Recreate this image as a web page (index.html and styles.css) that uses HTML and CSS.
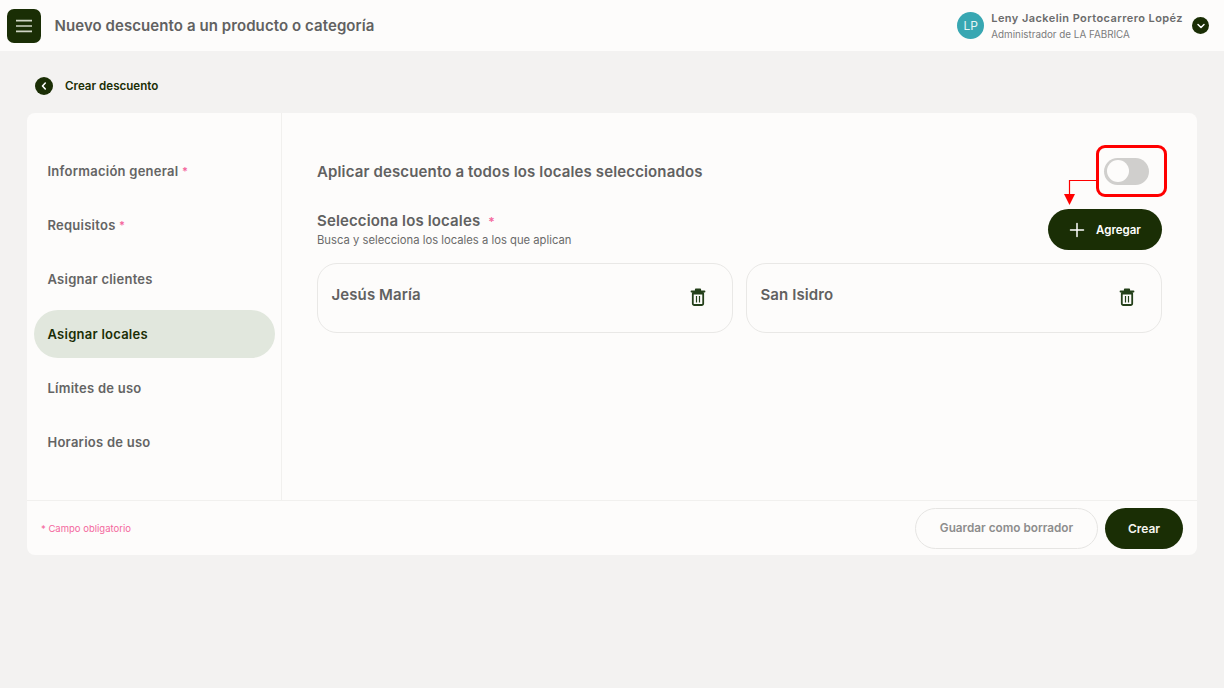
FILE: index.html
```html
<!DOCTYPE html>
<html lang="es">
<head>
<meta charset="utf-8">
<title>Nuevo descuento</title>
<link rel="stylesheet" href="styles.css">
</head>
<body>
<header class="topbar">
  <div class="topbar-left">
    <button class="menu-btn" aria-label="Menú">
      <svg width="18" height="14" viewBox="0 0 18 14"><path d="M1 1.700h16M1 7h16M1 12.300h16" stroke="#cfd5c5" stroke-width="1.700" fill="none"/></svg>
    </button>
    <h1 class="page-title">Nuevo descuento a un producto o categoría</h1>
  </div>
  <div class="user">
    <div class="avatar">LP</div>
    <div class="user-text">
      <div class="user-name">Leny Jackelin Portocarrero Lopéz</div>
      <div class="user-role">Administrador de LA FABRICA</div>
    </div>
    <span class="round-icon small">
      <svg width="10" height="10" viewBox="0 0 10 10"><path d="M2 3.500 5 6.500 8 3.500" stroke="#fff" stroke-width="1.500" stroke-linecap="round" stroke-linejoin="round" fill="none"/></svg>
    </span>
  </div>
</header>

<main class="page">
  <div class="crumb">
    <span class="round-icon">
      <svg width="10" height="10" viewBox="0 0 10 10"><path d="M6.300 2 3.500 5l2.800 3" stroke="#fff" stroke-width="1.600" stroke-linecap="round" stroke-linejoin="round" fill="none"/></svg>
    </span>
    <span class="crumb-text">Crear descuento</span>
  </div>

  <section class="card">
    <div class="card-body">
      <nav class="side">
        <a class="side-item">Información general <span class="req">*</span></a>
        <a class="side-item">Requisitos <span class="req">*</span></a>
        <a class="side-item">Asignar clientes</a>
        <a class="side-item active">Asignar locales</a>
        <a class="side-item">Límites de uso</a>
        <a class="side-item">Horarios de uso</a>
      </nav>
      <div class="content">
        <div class="row-toggle">
          <h2 class="apply-title">Aplicar descuento a todos los locales seleccionados</h2>
          <div class="toggle-wrap">
            <div class="toggle"><span class="knob"></span></div>
            <div class="highlight"></div>
            <svg class="arrow" width="36" height="28" viewBox="0 0 36 28"><path d="M34 1.500H5.500V16" stroke="#f00" stroke-width="1.200" fill="none"/><path d="M0 15h11l-5.500 11z" fill="#f00"/></svg>
          </div>
        </div>
        <div class="row-select">
          <div>
            <h3 class="select-title">Selecciona los locales <span class="req req-gap">*</span></h3>
            <p class="select-sub">Busca y selecciona los locales a los que aplican</p>
          </div>
          <button class="btn-add">
            <svg width="16" height="16" viewBox="0 0 16 16"><path d="M8 1.500v13M1.500 8h13" stroke="#fff" stroke-width="1.500" stroke-linecap="round" fill="none"/></svg>
            <span>Agregar</span>
          </button>
        </div>
        <div class="locals">
          <div class="local">
            <span class="local-name">Jesús María</span>
            <svg class="trash" width="16" height="18" viewBox="0 0 16 18"><path d="M5.800 2.800V1.500h4.400v1.300M1.500 3.500h13M2.800 5.500h10.400v10a1.500 1.500 0 0 1-1.500 1.500H4.300a1.500 1.500 0 0 1-1.500-1.500z" stroke="#24401a" stroke-width="1.800" fill="none" stroke-linejoin="round" stroke-linecap="round"/><path d="M6.500 8v6.500M9.500 8v6.500" stroke="#24401a" stroke-width="1.200" fill="none"/></svg>
          </div>
          <div class="local">
            <span class="local-name">San Isidro</span>
            <svg class="trash" width="16" height="18" viewBox="0 0 16 18"><path d="M5.800 2.800V1.500h4.400v1.300M1.500 3.500h13M2.800 5.500h10.400v10a1.500 1.500 0 0 1-1.500 1.500H4.300a1.500 1.500 0 0 1-1.500-1.500z" stroke="#24401a" stroke-width="1.800" fill="none" stroke-linejoin="round" stroke-linecap="round"/><path d="M6.500 8v6.500M9.500 8v6.500" stroke="#24401a" stroke-width="1.200" fill="none"/></svg>
          </div>
        </div>
      </div>
    </div>
    <footer class="card-foot">
      <span class="foot-note">* Campo obligatorio</span>
      <div class="foot-actions">
        <button class="btn-draft">Guardar como borrador</button>
        <button class="btn-create">Crear</button>
      </div>
    </footer>
  </section>
</main>
</body>
</html>
```

FILE: styles.css
```css
* { box-sizing: border-box; }
html, body { margin: 0; height: 100%; }
body {
  background: #f3f2f1;
  font-family: Inter, "Liberation Sans", sans-serif;
  color: #5f5f5f;
  overflow: hidden;
}
button { font-family: inherit; border: 0; padding: 0; }
h1, h2, h3, p { margin: 0; }

.topbar {
  height: 51px;
  background: #fdfcfb;
  display: flex;
  align-items: center;
  justify-content: space-between;
  padding: 0 15px 0 7px;
}
.topbar-left { display: flex; align-items: center; gap: 13.500px; }
.menu-btn {
  width: 34px;
  height: 34px;
  border-radius: 7px;
  background: #1a2e05;
  display: flex;
  align-items: center;
  justify-content: center;
}
.page-title { font-size: 15px; font-weight: 600; color: #616161; line-height: 20px; letter-spacing: .08px; }
.user { display: flex; align-items: center; }
.avatar {
  width: 27px;
  height: 27px;
  border-radius: 50%;
  background: #38a7b2;
  color: #e8f5f6;
  font-size: 12px;
  display: flex;
  align-items: center;
  justify-content: center;
  margin-right: 7px;
}
.user-text { margin-right: 9px; }
.user-name { font-size: 11px; font-weight: 600; color: #6b6b6b; line-height: 14px; letter-spacing: .43px; }
.user-role { font-size: 9.850px; color: #7b7b7b; line-height: 13px; margin-top: 3px; }
.round-icon {
  width: 18px;
  height: 18px;
  border-radius: 50%;
  background: #1a2e05;
  display: flex;
  align-items: center;
  justify-content: center;
  flex: none;
}
.round-icon.small { width: 17px; height: 17px; }

.page { padding: 0 27px; }
.crumb { display: flex; align-items: center; gap: 12px; height: 18px; margin: 26px 0 0 8px; }
.crumb-text { font-size: 11.600px; font-weight: 600; color: #1a2e05; }

.card {
  margin-top: 18px;
  height: 442px;
  background: #fdfcfb;
  border-radius: 8px;
  display: flex;
  flex-direction: column;
}
.card-body { display: flex; height: 388px; border-bottom: 1px solid #f1f0ee; }
.side {
  width: 255px;
  flex: none;
  border-right: 1px solid #f1f0ee;
  padding: 34px 6px 0 7px;
  display: flex;
  flex-direction: column;
  gap: 6.200px;
}
.side-item {
  height: 48px;
  flex: none;
  display: flex;
  align-items: center;
  padding-left: 13.500px;
  border-radius: 24px;
  font-size: 13px;
  font-weight: 600;
  color: #646464;
  letter-spacing: .25px;
  white-space: pre;
}
.side-item.active { background: #e1e7dd; color: #1a2e05; }
.req { color: #f4679d; font-size: 11px; letter-spacing: 0; }
.req-gap { margin-left: 4px; font-size: 12px; }

.content { flex: 1; padding: 32px 35px 0 35px; min-width: 0; }
.row-toggle { display: flex; justify-content: space-between; align-items: center; height: 52px; }
.apply-title { font-size: 15px; font-weight: 600; color: #616161; letter-spacing: .14px; }
.toggle-wrap { position: relative; margin-right: 13px; }
.toggle {
  width: 45px;
  height: 27px;
  border-radius: 14px;
  background: #d0cfcd;
  padding: 2.500px;
}
.knob { display: block; width: 22px; height: 22px; border-radius: 50%; background: #fdfcfb; }
.highlight {
  position: absolute;
  left: -8px;
  top: -13px;
  width: 71px;
  height: 52px;
  border: 3px solid #f00;
  border-radius: 9px;
}
.arrow { position: absolute; left: -40px; top: 21px; }

.row-select { display: flex; justify-content: space-between; align-items: flex-start; margin-top: 12px; }
.select-title { font-size: 15px; font-weight: 600; color: #616161; line-height: 20px; margin-top: 2px; letter-spacing: .14px; }
.select-sub { font-size: 11.250px; color: #6a6a6a; line-height: 14px; margin-top: 1px; }
.btn-add {
  width: 114px;
  height: 41px;
  border-radius: 21px;
  background: #1a2e05;
  color: #fff;
  font-size: 11.500px;
  font-weight: 600;
  display: flex;
  align-items: center;
  justify-content: center;
  gap: 11px;
}
.locals { display: grid; grid-template-columns: 1fr 1fr; gap: 13px; margin-top: 13px; }
.local {
  height: 70px;
  border: 1px solid #e9e8e6;
  border-radius: 20px;
  display: flex;
  justify-content: space-between;
  align-items: flex-start;
  padding: 22px 26px 0 13.500px;
}
.local-name { font-size: 15px; font-weight: 600; color: #616161; line-height: 18px; letter-spacing: .1px; }
.trash { margin-top: 2px; }

.card-foot {
  flex: 1;
  display: flex;
  justify-content: space-between;
  align-items: center;
  padding: 0 14px;
}
.foot-note { font-size: 9.500px; color: #f4679d; }
.foot-actions { display: flex; gap: 7px; }
.btn-draft {
  width: 183px;
  height: 41px;
  border-radius: 21px;
  border: 1px solid #e6e5e3;
  background: transparent;
  color: #8d8d8d;
  font-size: 11.750px;
  font-weight: 600;
}
.btn-create {
  width: 78px;
  height: 41px;
  border-radius: 21px;
  background: #1a2e05;
  color: #f5f5f0;
  font-size: 12px;
  font-weight: 600;
}
```
